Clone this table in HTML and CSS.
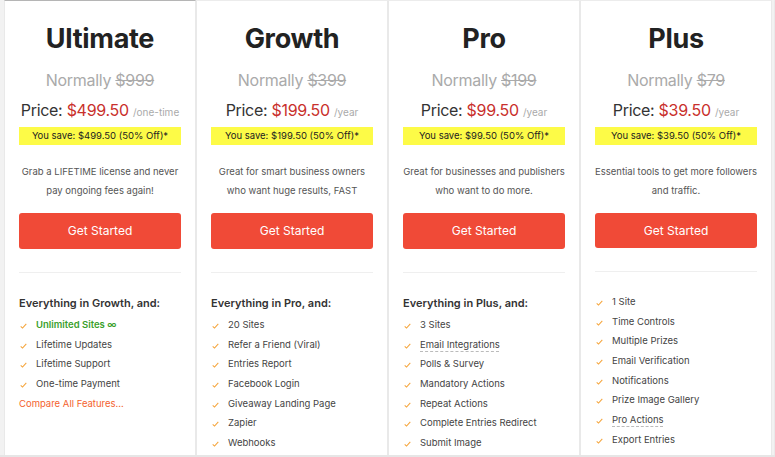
FILE: index.html
```html
<!DOCTYPE html>
<html>
<head>
<meta charset="utf-8">
<link rel="stylesheet" href="styles.css">
</head>
<body>
<div class="plans">
  <div class="plan featured">
    <h2 class="title">Ultimate</h2>
    <div class="normally">Normally <s>$999</s></div>
    <div class="price">Price: <span class="amt">$499.50</span> <span class="per">/one-time</span></div>
    <div class="save">You save: $499.50 (50% Off)*</div>
    <p class="desc">Grab a LIFETIME license and never pay ongoing fees again!</p>
    <a class="btn">Get Started</a>
    <hr class="sep">
    <div class="heading">Everything in Growth, and:</div>
    <ul class="feats">
      <li class="hl"><svg class="ck" viewBox="0 0 10 8"><polyline points="1,4.5 3.6,7 9,1"/></svg>Unlimited Sites ∞</li>
      <li><svg class="ck" viewBox="0 0 10 8"><polyline points="1,4.5 3.6,7 9,1"/></svg>Lifetime Updates</li>
      <li><svg class="ck" viewBox="0 0 10 8"><polyline points="1,4.5 3.6,7 9,1"/></svg>Lifetime Support</li>
      <li><svg class="ck" viewBox="0 0 10 8"><polyline points="1,4.5 3.6,7 9,1"/></svg>One-time Payment</li>
    </ul>
    <a class="compare">Compare All Features...</a>
  </div>
  <div class="plan">
    <h2 class="title">Growth</h2>
    <div class="normally">Normally <s>$399</s></div>
    <div class="price">Price: <span class="amt">$199.50</span> <span class="per">/year</span></div>
    <div class="save">You save: $199.50 (50% Off)*</div>
    <p class="desc">Great for smart business owners who want huge results, FAST</p>
    <a class="btn">Get Started</a>
    <hr class="sep">
    <div class="heading">Everything in Pro, and:</div>
    <ul class="feats">
      <li><svg class="ck" viewBox="0 0 10 8"><polyline points="1,4.5 3.6,7 9,1"/></svg>20 Sites</li>
      <li><svg class="ck" viewBox="0 0 10 8"><polyline points="1,4.5 3.6,7 9,1"/></svg>Refer a Friend (Viral)</li>
      <li><svg class="ck" viewBox="0 0 10 8"><polyline points="1,4.5 3.6,7 9,1"/></svg>Entries Report</li>
      <li><svg class="ck" viewBox="0 0 10 8"><polyline points="1,4.5 3.6,7 9,1"/></svg>Facebook Login</li>
      <li><svg class="ck" viewBox="0 0 10 8"><polyline points="1,4.5 3.6,7 9,1"/></svg>Giveaway Landing Page</li>
      <li><svg class="ck" viewBox="0 0 10 8"><polyline points="1,4.5 3.6,7 9,1"/></svg>Zapier</li>
      <li><svg class="ck" viewBox="0 0 10 8"><polyline points="1,4.5 3.6,7 9,1"/></svg>Webhooks</li>
    </ul>
  </div>
  <div class="plan">
    <h2 class="title">Pro</h2>
    <div class="normally">Normally <s>$199</s></div>
    <div class="price">Price: <span class="amt">$99.50</span> <span class="per">/year</span></div>
    <div class="save">You save: $99.50 (50% Off)*</div>
    <p class="desc">Great for businesses and publishers who want to do more.</p>
    <a class="btn">Get Started</a>
    <hr class="sep">
    <div class="heading">Everything in Plus, and:</div>
    <ul class="feats">
      <li><svg class="ck" viewBox="0 0 10 8"><polyline points="1,4.5 3.6,7 9,1"/></svg>3 Sites</li>
      <li><svg class="ck" viewBox="0 0 10 8"><polyline points="1,4.5 3.6,7 9,1"/></svg><span class="tip">Email Integrations</span></li>
      <li><svg class="ck" viewBox="0 0 10 8"><polyline points="1,4.5 3.6,7 9,1"/></svg>Polls &amp; Survey</li>
      <li><svg class="ck" viewBox="0 0 10 8"><polyline points="1,4.5 3.6,7 9,1"/></svg>Mandatory Actions</li>
      <li><svg class="ck" viewBox="0 0 10 8"><polyline points="1,4.5 3.6,7 9,1"/></svg>Repeat Actions</li>
      <li><svg class="ck" viewBox="0 0 10 8"><polyline points="1,4.5 3.6,7 9,1"/></svg>Complete Entries Redirect</li>
      <li><svg class="ck" viewBox="0 0 10 8"><polyline points="1,4.5 3.6,7 9,1"/></svg>Submit Image</li>
    </ul>
  </div>
  <div class="plan">
    <h2 class="title">Plus</h2>
    <div class="normally">Normally <s>$79</s></div>
    <div class="price">Price: <span class="amt">$39.50</span> <span class="per">/year</span></div>
    <div class="save">You save: $39.50 (50% Off)*</div>
    <p class="desc">Essential tools to get more followers and traffic.</p>
    <a class="btn">Get Started</a>
    <hr class="sep">
    <ul class="feats nohead">
      <li><svg class="ck" viewBox="0 0 10 8"><polyline points="1,4.5 3.6,7 9,1"/></svg>1 Site</li>
      <li><svg class="ck" viewBox="0 0 10 8"><polyline points="1,4.5 3.6,7 9,1"/></svg>Time Controls</li>
      <li><svg class="ck" viewBox="0 0 10 8"><polyline points="1,4.5 3.6,7 9,1"/></svg>Multiple Prizes</li>
      <li><svg class="ck" viewBox="0 0 10 8"><polyline points="1,4.5 3.6,7 9,1"/></svg>Email Verification</li>
      <li><svg class="ck" viewBox="0 0 10 8"><polyline points="1,4.5 3.6,7 9,1"/></svg>Notifications</li>
      <li><svg class="ck" viewBox="0 0 10 8"><polyline points="1,4.5 3.6,7 9,1"/></svg>Prize Image Gallery</li>
      <li><svg class="ck" viewBox="0 0 10 8"><polyline points="1,4.5 3.6,7 9,1"/></svg><span class="tip">Pro Actions</span></li>
      <li><svg class="ck" viewBox="0 0 10 8"><polyline points="1,4.5 3.6,7 9,1"/></svg>Export Entries</li>
      <li class="fade"><svg class="ck" viewBox="0 0 10 8"><polyline points="1,4.5 3.6,7 9,1"/></svg>Design Options</li>
    </ul>
  </div>
  <div class="plan ghost"></div>
</div>
</body>
</html>
```

FILE: styles.css
```css
html, body {
  margin: 0;
  padding: 0;
  height: 457px;
  overflow: hidden;
  background: #f2f2f2;
  font-family: Inter, "Noto Sans", sans-serif;
  color: #333;
}
.plans {
  display: flex;
  padding-left: 4px;
  height: 455px;
  border-bottom: 2px solid #e6e6e6;
}
.plan {
  flex: 0 0 192px;
  box-sizing: border-box;
  background: #fff;
  border-left: 1px solid #e9e9e9;
  border-right: 1px solid #e9e9e9;
  border-top: 1px solid #ececec;
  padding: 0 14px;
  display: flex;
  flex-direction: column;
  text-align: center;
  overflow: hidden;
}
.plan.featured {
  border-top: 1px solid #b5b5b5;
}
.plan.ghost {
  margin-left: 2px;
}
.title {
  margin: 20px 0 0;
  font-size: 27px;
  line-height: 36px;
  font-weight: 700;
  color: #222;
  letter-spacing: -0.3px;
}
.normally {
  margin-top: 13px;
  font-size: 16px;
  line-height: 20px;
  color: #aaa;
  letter-spacing: -0.3px;
}
.normally s {
  text-decoration-thickness: 1px;
}
.price {
  margin-top: 10px;
  font-size: 16px;
  line-height: 20px;
  color: #333;
  letter-spacing: -0.3px;
}
.price .amt {
  color: #c9302c;
}
.price .per {
  font-size: 10px;
  color: #aaa;
  letter-spacing: 0;
}
.save {
  margin-top: 5px;
  background: #fdfb47;
  font-size: 9.5px;
  line-height: 18px;
  color: #222;
}
.desc {
  margin: 17px 0 0;
  font-size: 9.5px;
  line-height: 19px;
  color: #555;
}
.btn {
  margin-top: 13px;
  display: block;
  height: 36px;
  line-height: 35px;
  background: #f04a37;
  color: #fff;
  font-size: 12px;
  border-radius: 3px;
}
.sep {
  margin: 23px 0 0;
  border: 0;
  border-top: 1px solid #efefef;
  height: 0;
}
.heading {
  margin-top: 22px;
  text-align: left;
  font-size: 11px;
  line-height: 16px;
  font-weight: 600;
  color: #333;
}
.feats {
  list-style: none;
  margin: 4px 0 0;
  padding: 0;
  text-align: left;
}
.feats.nohead {
  margin-top: 20px;
}
.feats li {
  display: flex;
  align-items: center;
  height: 19.7px;
  font-size: 9.5px;
  line-height: 19.7px;
  color: #444;
}
.feats li.hl {
  color: #3aa02c;
  font-weight: 600;
}
.feats li.fade {
  color: #ccc;
}
.ck {
  width: 7px;
  height: 6px;
  margin: 2px 9px 0 1px;
  fill: none;
  stroke: #f5a43a;
  stroke-width: 1.5;
  flex: 0 0 auto;
}
.tip {
  text-decoration: underline dashed #bbb;
  text-decoration-thickness: 1px;
  text-underline-offset: 3px;
}
.compare {
  margin-top: 1px;
  text-align: left;
  font-size: 9.5px;
  line-height: 18px;
  color: #f4622e;
}
```
